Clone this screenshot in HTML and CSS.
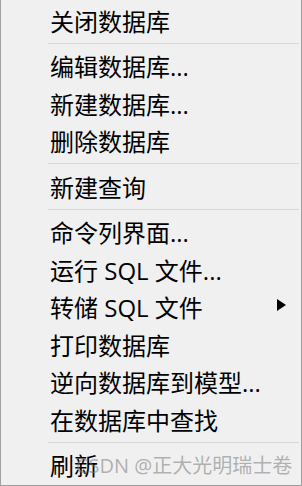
FILE: index.html
```html
<!DOCTYPE html>
<html lang="zh-CN">
<head>
    <meta charset="UTF-8">
    <meta name="viewport" content="width=device-width, initial-scale=1.0">
    <title>数据库菜单</title>
    <link rel="stylesheet" href="styles.css">
</head>
<body>
    <div class="menu">
        <div class="item">关闭数据库</div>
        <div class="sep"></div>
        <div class="item">编辑数据库...</div>
        <div class="item">新建数据库...</div>
        <div class="item">删除数据库</div>
        <div class="sep"></div>
        <div class="item">新建查询</div>
        <div class="sep"></div>
        <div class="item">命令列界面...</div>
        <div class="item">运行 SQL 文件...</div>
        <div class="item has-sub">转储 SQL 文件<span class="arrow"></span></div>
        <div class="item">打印数据库</div>
        <div class="item">逆向数据库到模型...</div>
        <div class="item">在数据库中查找</div>
        <div class="sep"></div>
        <div class="item">刷新</div>

        <div class="watermark">CSDN @正大光明瑞士卷</div>
    </div>
</body>
</html>
```

FILE: styles.css
```css
body {
    margin: 0;
    background: #f0f0f0;
    font-family: "Open Sans", "Noto Sans CJK SC", sans-serif;
}
.menu {
    position: relative;
    box-sizing: border-box;
    width: 302px;
    height: 486px;
    padding-top: 1.5px;
    background: #f0f0f0;
    border: 1px solid #a0a0a0;
    border-top: none;
    color: #000;
}
.item {
    display: flex;
    align-items: center;
    height: 37.5px;
    padding-left: 49px;
    font-size: 24px;
    white-space: nowrap;
}
.sep {
    height: 1px;
    margin: 3.5px 2px 3.5px 47px;
    background: #d7d7d7;
}
.arrow {
    margin-left: auto;
    margin-right: 15px;
    width: 0;
    height: 0;
    border-left: 9px solid #000;
    border-top: 6px solid transparent;
    border-bottom: 6px solid transparent;
    margin-top: -4px;
}
.watermark {
    position: absolute;
    left: 75px;
    top: 450px;
    font-size: 20px;
    color: rgba(120, 120, 120, 0.55);
    white-space: nowrap;
}
```
